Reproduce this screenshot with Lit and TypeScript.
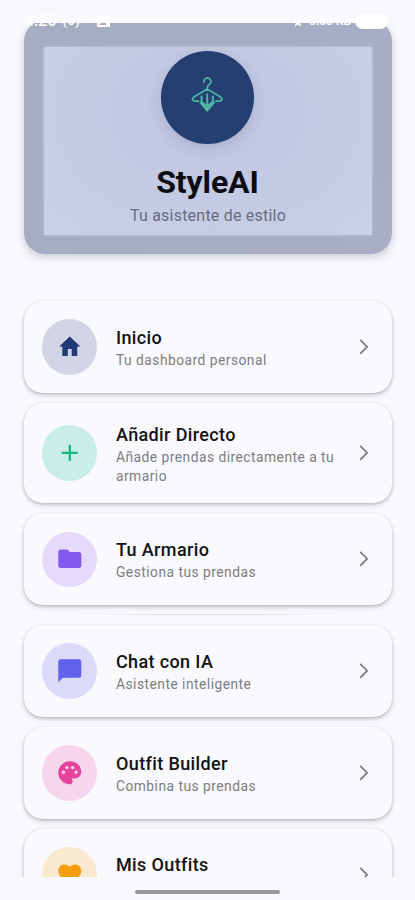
import { LitElement, html, css, svg, type TemplateResult } from "lit";
import { customElement, property } from "lit/decorators.js";

const icons: Record<string, TemplateResult> = {
  home: svg`<path d="M10.300 20v-6h3.400v6h4.800v-8.200h2.700L12 3l-9.200 8.800h2.700V20z"/>`,
  add: svg`<path d="M19 13h-6v6h-2v-6H5v-2h6V5h2v6h6v2z"/>`,
  folder: svg`<path d="M10 4H4c-1.1 0-1.99.9-1.99 2L2 18c0 1.1.9 2 2 2h16c1.1 0 2-.9 2-2V8c0-1.1-.9-2-2-2h-8l-2-2z"/>`,
  chat: svg`<path d="M20 2H4c-1.1 0-2 .9-2 2v18l4-4h14c1.1 0 2-.9 2-2V4c0-1.1-.9-2-2-2z"/>`,
  palette: svg`<path d="M12 2C6.490 2 2 6.490 2 12s4.490 10 10 10c1.380 0 2.500-1.120 2.500-2.500 0-.610-.230-1.200-.640-1.670-.080-.100-.130-.210-.130-.330 0-.280.220-.500.500-.500H16c3.310 0 6-2.690 6-6 0-4.960-4.490-9-10-9zm-5.500 11c-.830 0-1.500-.670-1.500-1.500S5.670 10 6.500 10s1.500.670 1.500 1.500S7.330 13 6.500 13zm3-4C8.670 9 8 8.330 8 7.500S8.670 6 9.500 6s1.500.670 1.500 1.500S10.330 9 9.500 9zm5 0c-.830 0-1.500-.670-1.500-1.500S13.670 6 14.500 6s1.500.670 1.500 1.500S15.330 9 14.500 9zm3 4c-.830 0-1.500-.670-1.500-1.500s.670-1.500 1.500-1.500 1.500.670 1.500 1.500-.670 1.500-1.500 1.500z"/>`,
  heart: svg`<path d="m12 21.350-1.450-1.320C5.400 15.360 2 12.280 2 8.500 2 5.420 4.420 3 7.500 3c1.740 0 3.410.810 4.500 2.090C13.090 3.810 14.760 3 16.500 3 19.580 3 22 5.420 22 8.500c0 3.780-3.400 6.860-8.550 11.540L12 21.350z"/>`,
};

@customElement("menu-card")
class MenuCard extends LitElement {
  @property() icon = "home";
  @property() heading = "";
  @property() detail = "";

  static styles = css`
    :host { display: block; }
    .card {
      box-sizing: border-box; display: flex; align-items: center;
      min-height: 91.700px; padding: 18.300px 18px 18.300px 18.500px; border-radius: 19px;
      background: #faf9fe;
      box-shadow: 0 1px 3px rgba(30, 30, 45, .22), 0 3px 5px rgba(30, 30, 45, .13);
    }
    .disc {
      flex: none; width: 55.400px; height: 55.400px; border-radius: 50%;
      display: flex; align-items: center; justify-content: center;
    }
    .glyph { width: 27.600px; height: 27.600px; fill: currentColor; }
    .home { background: #d1d5e5; color: #203b76; }
    .add { background: #c9eee5; color: #13b77f; }
    .folder { background: #e5d9fc; color: #8457ee; }
    .chat { background: #dcdafb; color: #6062ef; }
    .palette { background: #f7d5ec; color: #e7439d; }
    .heart { background: #fae8cf; color: #f59e0b; }
    .copy { flex: 1; margin-left: 18.600px; min-width: 0; }
    .heading { padding-top: .400px; color: #121214; font-size: 18px; line-height: 25px; font-weight: 500; letter-spacing: .370px; }
    .detail { min-height: 18.500px; color: #7d7d81; font-size: 13.800px; line-height: 18.500px; letter-spacing: .480px; padding-top: 1.500px; }
    .chevron { flex: none; width: 27.600px; height: 27.600px; margin-right: -4.500px; fill: #808085; }
  `;

  render() {
    return html`<div class="card">
      <div class="disc ${this.icon}"><svg class="glyph" viewBox="0 0 24 24">${icons[this.icon]}</svg></div>
      <div class="copy"><div class="heading">${this.heading}</div><div class="detail">${this.detail}</div></div>
      <svg class="chevron" viewBox="0 0 24 24"><path d="M8.300 6.500 9.400 5.400 16 12l-6.600 6.600-1.100-1.100L13.800 12z"/></svg>
    </div>`;
  }
}

@customElement("app-root")
class AppRoot extends LitElement {
  static styles = css`
    :host {
      display: block; position: relative; width: 415px; height: 900px; overflow: hidden;
      background: #f8f8fd; font-family: Roboto, "Liberation Sans", sans-serif;
    }
    .viewport { box-sizing: border-box; margin-top: 23px; height: 854px; overflow: hidden; padding: 0 23.500px; }
    .hero {
      box-sizing: border-box; margin-top: -3px; height: 233.500px; padding: 27px 20px 18px 20px;
      border-radius: 21px; background: linear-gradient(120deg, #a6adc3, #a5acc2 48%, #a9adc5);
      box-shadow: 0 3px 9px rgba(40, 45, 70, .22);
    }
    .panel {
      height: 187.700px; display: flex; flex-direction: column; align-items: center;
      background: radial-gradient(ellipse at 50% 35%, #bfc6e1 0, #c6cbe4 58%, #cbd0e7 100%);
      box-shadow: 0 0 3px #c2c8dd;
    }
    .logo { margin-top: 4px; width: 92.500px; height: 92.500px; border-radius: 50%; background: #263f73; box-shadow: 0 4px 14px rgba(60, 70, 115, .18); flex: none; }
    .logo svg { display: block; width: 100%; height: 100%; fill: none; stroke: #4bb5a2; stroke-width: 1.700; stroke-linecap: round; stroke-linejoin: round; }
    .brand { margin-top: 18px; font-size: 32px; line-height: 40px; font-weight: 700; color: #0c0d12; letter-spacing: -.100px; }
    .tagline { margin-top: 2px; padding-left: 1px; font-size: 16px; line-height: 23px; color: #686c7f; letter-spacing: .220px; }
    .menu { display: flex; flex-direction: column; gap: 9.900px; margin-top: 47.500px; }
    .rule { height: 1px; margin: -1px 50px 0; background: linear-gradient(90deg, transparent, #dcdce1 35%, #dcdce1 65%, transparent); }
    .status {
      position: absolute; top: 13px; left: 25px; right: 27px; height: 16px; display: flex; align-items: center;
      color: #fff; font-size: 16px; line-height: 16px; font-weight: 500;
    }
    .signal { margin-left: 6px; font-size: 12px; letter-spacing: 1px; }
    .mail { width: 13px; height: 11px; margin-left: 8px; fill: #fff; }
    .space { flex: 1; }
    .star { width: 10px; height: 10px; margin-top: 2px; fill: #fff; }
    .net { margin-left: 6px; font-size: 12px; }
    .battery { width: 33px; height: 15px; margin-left: 4px; border-radius: 8px; background: #fff; }
    .handle { width: 145px; height: 4px; margin: 13px auto 0; border-radius: 2px; background: #97979c; }
  `;

  render() {
    return html`
      <div class="viewport">
        <div class="hero"><div class="panel">
          <div class="logo"><svg viewBox="0 0 92.500 92.500">
            <path d="M42.900 31.200v-.700a3.500 3.500 0 1 1 5.300 3c-1.500.900-2 1.700-2 4.400M37.500 50.200h-3c-3.600 0-4.100-2.800-1.600-4.300L46.200 38l13.300 7.900c2.500 1.500 2 4.300-1.600 4.300h-3"/>
            <path stroke-width="2" d="M46.200 43.500v15.500M40.500 45.500v4c0 3.500 5.700 3.500 5.700 8.500M51.900 45.500v4c0 3.500-5.700 3.500-5.700 8.500M39.500 51.500l6.700 8 6.700-8"/>
          </svg></div>
          <div class="brand">StyleAI</div>
          <div class="tagline">Tu asistente de estilo</div>
        </div></div>
        <div class="menu">
          <menu-card icon="home" heading="Inicio" detail="Tu dashboard personal"></menu-card>
          <menu-card icon="add" heading="Añadir Directo" detail="Añade prendas directamente a tu armario"></menu-card>
          <menu-card icon="folder" heading="Tu Armario" detail="Gestiona tus prendas"></menu-card>
          <div class="rule"></div>
          <menu-card icon="chat" heading="Chat con IA" detail="Asistente inteligente"></menu-card>
          <menu-card icon="palette" heading="Outfit Builder" detail="Combina tus prendas"></menu-card>
          <menu-card icon="heart" heading="Mis Outfits"></menu-card>
        </div>
      </div>
      <div class="handle"></div>
      <div class="status">
        <span>4:20</span><span class="signal">(ο)··</span>
        <svg class="mail" viewBox="0 0 13 11"><path fill-rule="evenodd" d="M0 0h13v11H0zM2 9l4-4 1 2 2-3v5z"/></svg>
        <span class="space"></span><svg class="star" viewBox="0 0 24 24"><path d="m12 1 3 8h8l-6 5 3 9-8-5-8 5 3-9-6-5h8z"/></svg><span class="net">0.60 KB</span><span class="battery"></span>
      </div>`;
  }
}
